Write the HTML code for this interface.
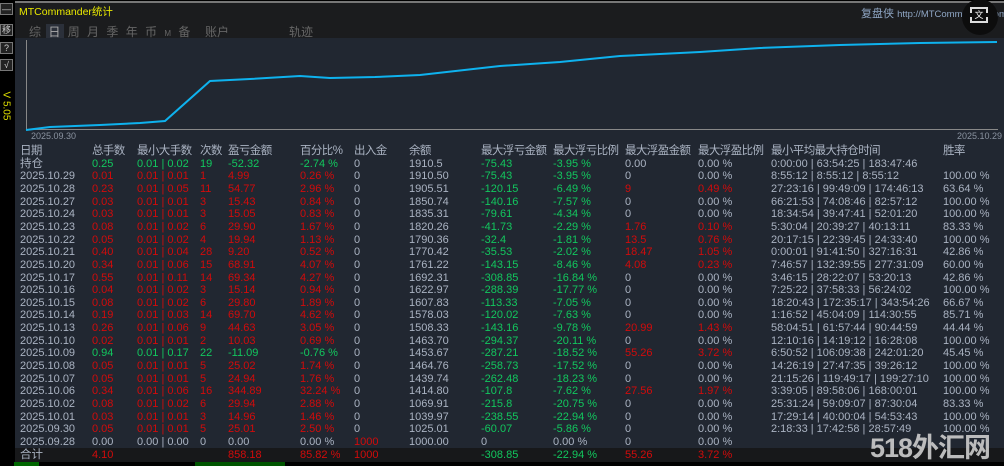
<!DOCTYPE html>
<html><head><meta charset="utf-8"><style>
*{margin:0;padding:0;box-sizing:border-box}
body{width:1004px;height:466px;background:#000;position:relative;overflow:hidden;font-family:"Liberation Sans","Noto Sans CJK SC",sans-serif;font-size:11px;color:#aab3c2}
.abs{position:absolute}
#side{left:0;top:0;width:14px;height:466px;background:#000}
.btn{position:absolute;left:0;width:13px;height:12px;border:1px solid #777;background:#222;color:#ccc;font-size:9px;line-height:10px;text-align:center}
#panel{left:15px;top:3px;width:989px;height:459px;background:#212731}
#titlebar{left:15px;top:3px;width:989px;height:35px;background:#1b1c1e}
#topline{left:15px;top:1px;width:989px;height:2px;background:#777}
.row{position:absolute;left:15px;width:989px;height:12.65px;line-height:12.65px;white-space:nowrap}
.row span{position:absolute;top:0}
.a{left:5px}.b{left:77px}.c{left:122px}.d{left:185px}.e{left:213px}.f{left:285px}.g{left:339px}.h{left:394px}.i{left:466px}.j{left:538px}.k{left:610px}.l{left:683px}.m{left:756px}.n{left:928px}
.r{color:#d20b0b}.gr{color:#12c75e}
.hd{color:#aab3c2;font-size:11.5px;letter-spacing:-0.6px}
</style></head><body>
<div class="abs" id="side">
<div class="btn" style="top:3px">—</div>
<div class="btn" style="top:24px">移</div>
<div class="btn" style="top:42px">?</div>
<div class="btn" style="top:59px">√</div>
<div class="abs" style="left:-4px;top:96px;width:20px;color:#e0e000;font-size:10px;transform:rotate(90deg);white-space:nowrap">V 5.05</div>
</div>
<div class="abs" id="panel"></div>
<div class="abs" id="titlebar"></div>
<div class="abs" id="topline"></div>
<div class="abs" style="left:19px;top:4px;color:#e8e800;font-size:10.5px">MTCommander统计</div>
<div class="abs" style="left:46px;top:24px;width:18px;height:14px;background:#2b303a"></div>
<div class="abs" style="left:29px;top:23px;color:#666;font-size:12px;word-spacing:4px;white-space:nowrap">综 <span style="color:#aaa">日</span> 周 月 季 年 币 <span style="font-size:8px">M</span> 备 &nbsp;账户</div>
<div class="abs" style="left:289px;top:23px;color:#666;font-size:12px">轨迹</div>
<div class="abs" style="left:861px;top:5px;color:#8fa6c4;font-size:11px;white-space:nowrap">复盘侠 <span style="font-size:9.5px">http://MTCommander.com</span></div>
<div class="abs" style="left:962px;top:-1px;width:36px;height:36px;border-radius:50%;background:#0d0d0d"></div>
<div class="abs" style="left:970px;top:7px;width:18px;height:16px;border:2px solid #ddd;color:#fff;font-size:9px;text-align:center;line-height:12px;border-left-style:dashed;border-right-style:dashed">文</div>
<svg class="abs" style="left:0;top:0" width="1004" height="145">
<line x1="26.5" y1="40" x2="26.5" y2="130" stroke="#888" stroke-width="1"/>
<line x1="26" y1="129.5" x2="998" y2="129.5" stroke="#888" stroke-width="1"/>
<polyline fill="none" stroke="#0eb2ee" stroke-width="2" points="26,130 50,127 100,125 140,123 165,121 210,81 250,79 300,76 330,78 375,77 420,75 500,66 560,62 620,56 700,52 760,48 840,45 920,43 997,42"/>
<text x="31" y="139" fill="#8a93a0" font-size="9" font-family="Liberation Sans">2025.09.30</text>
<text x="957" y="139" fill="#8a93a0" font-size="9" font-family="Liberation Sans">2025.10.29</text>
</svg>
<div class="abs" style="left:15px;top:448px;width:989px;height:14px;background:#17181a"></div>
<div class="abs" style="left:0;top:462px;width:1004px;height:4px;background:#000"></div>
<div class="abs" style="left:14px;top:462px;width:25px;height:4px;background:#0a0;opacity:.6"></div>
<div class="abs" style="left:195px;top:462px;width:90px;height:4px;background:#0a0;opacity:.5"></div>

<div class="row hd" style="top:145px"><span class="a">日期</span><span class="b">总手数</span><span class="c">最小大手数</span><span class="d">次数</span><span class="e">盈亏金额</span><span class="f">百分比%</span><span class="g">出入金</span><span class="h">余额</span><span class="i">最大浮亏金额</span><span class="j">最大浮亏比例</span><span class="k">最大浮盈金额</span><span class="l">最大浮盈比例</span><span class="m">最小平均最大持仓时间</span><span class="n">胜率</span></div>
<div class="row" style="top:157.6px"><span class="a" style="font-size:11.5px">持仓</span><span class="b gr">0.25</span><span class="c gr">0.01 | 0.02</span><span class="d gr">19</span><span class="e gr">-52.32</span><span class="f gr">-2.74 %</span><span class="g">0</span><span class="h">1910.5</span><span class="i gr">-75.43</span><span class="j gr">-3.95 %</span><span class="k">0.00</span><span class="l">0.00 %</span><span class="m">0:00:00 | 63:54:25 | 183:47:46</span></div>
<div class="row" style="top:170.3px"><span class="a">2025.10.29</span><span class="b r">0.01</span><span class="c r">0.01 | 0.01</span><span class="d r">1</span><span class="e r">4.99</span><span class="f r">0.26 %</span><span class="g">0</span><span class="h">1910.50</span><span class="i gr">-75.43</span><span class="j gr">-3.95 %</span><span class="k">0</span><span class="l">0.00 %</span><span class="m">8:55:12 | 8:55:12 | 8:55:12</span><span class="n">100.00 %</span></div>
<div class="row" style="top:182.9px"><span class="a">2025.10.28</span><span class="b r">0.23</span><span class="c r">0.01 | 0.05</span><span class="d r">11</span><span class="e r">54.77</span><span class="f r">2.96 %</span><span class="g">0</span><span class="h">1905.51</span><span class="i gr">-120.15</span><span class="j gr">-6.49 %</span><span class="k r">9</span><span class="l r">0.49 %</span><span class="m">27:23:16 | 99:49:09 | 174:46:13</span><span class="n">63.64 %</span></div>
<div class="row" style="top:195.6px"><span class="a">2025.10.27</span><span class="b r">0.03</span><span class="c r">0.01 | 0.01</span><span class="d r">3</span><span class="e r">15.43</span><span class="f r">0.84 %</span><span class="g">0</span><span class="h">1850.74</span><span class="i gr">-140.16</span><span class="j gr">-7.57 %</span><span class="k">0</span><span class="l">0.00 %</span><span class="m">66:21:53 | 74:08:46 | 82:57:12</span><span class="n">100.00 %</span></div>
<div class="row" style="top:208.2px"><span class="a">2025.10.24</span><span class="b r">0.03</span><span class="c r">0.01 | 0.01</span><span class="d r">3</span><span class="e r">15.05</span><span class="f r">0.83 %</span><span class="g">0</span><span class="h">1835.31</span><span class="i gr">-79.61</span><span class="j gr">-4.34 %</span><span class="k">0</span><span class="l">0.00 %</span><span class="m">18:34:54 | 39:47:41 | 52:01:20</span><span class="n">100.00 %</span></div>
<div class="row" style="top:220.9px"><span class="a">2025.10.23</span><span class="b r">0.08</span><span class="c r">0.01 | 0.02</span><span class="d r">6</span><span class="e r">29.90</span><span class="f r">1.67 %</span><span class="g">0</span><span class="h">1820.26</span><span class="i gr">-41.73</span><span class="j gr">-2.29 %</span><span class="k r">1.76</span><span class="l r">0.10 %</span><span class="m">5:30:04 | 20:39:27 | 40:13:11</span><span class="n">83.33 %</span></div>
<div class="row" style="top:233.5px"><span class="a">2025.10.22</span><span class="b r">0.05</span><span class="c r">0.01 | 0.02</span><span class="d r">4</span><span class="e r">19.94</span><span class="f r">1.13 %</span><span class="g">0</span><span class="h">1790.36</span><span class="i gr">-32.4</span><span class="j gr">-1.81 %</span><span class="k r">13.5</span><span class="l r">0.76 %</span><span class="m">20:17:15 | 22:39:45 | 24:33:40</span><span class="n">100.00 %</span></div>
<div class="row" style="top:246.2px"><span class="a">2025.10.21</span><span class="b r">0.40</span><span class="c r">0.01 | 0.04</span><span class="d r">28</span><span class="e r">9.20</span><span class="f r">0.52 %</span><span class="g">0</span><span class="h">1770.42</span><span class="i gr">-35.53</span><span class="j gr">-2.02 %</span><span class="k r">18.47</span><span class="l r">1.05 %</span><span class="m">0:00:01 | 91:41:50 | 327:16:31</span><span class="n">42.86 %</span></div>
<div class="row" style="top:258.8px"><span class="a">2025.10.20</span><span class="b r">0.34</span><span class="c r">0.01 | 0.06</span><span class="d r">15</span><span class="e r">68.91</span><span class="f r">4.07 %</span><span class="g">0</span><span class="h">1761.22</span><span class="i gr">-143.15</span><span class="j gr">-8.46 %</span><span class="k r">4.08</span><span class="l r">0.23 %</span><span class="m">7:46:57 | 132:39:55 | 277:31:09</span><span class="n">60.00 %</span></div>
<div class="row" style="top:271.5px"><span class="a">2025.10.17</span><span class="b r">0.55</span><span class="c r">0.01 | 0.11</span><span class="d r">14</span><span class="e r">69.34</span><span class="f r">4.27 %</span><span class="g">0</span><span class="h">1692.31</span><span class="i gr">-308.85</span><span class="j gr">-16.84 %</span><span class="k">0</span><span class="l">0.00 %</span><span class="m">3:46:15 | 28:22:07 | 53:20:13</span><span class="n">42.86 %</span></div>
<div class="row" style="top:284.1px"><span class="a">2025.10.16</span><span class="b r">0.04</span><span class="c r">0.01 | 0.02</span><span class="d r">3</span><span class="e r">15.14</span><span class="f r">0.94 %</span><span class="g">0</span><span class="h">1622.97</span><span class="i gr">-288.39</span><span class="j gr">-17.77 %</span><span class="k">0</span><span class="l">0.00 %</span><span class="m">7:25:22 | 37:58:33 | 56:24:02</span><span class="n">100.00 %</span></div>
<div class="row" style="top:296.8px"><span class="a">2025.10.15</span><span class="b r">0.08</span><span class="c r">0.01 | 0.02</span><span class="d r">6</span><span class="e r">29.80</span><span class="f r">1.89 %</span><span class="g">0</span><span class="h">1607.83</span><span class="i gr">-113.33</span><span class="j gr">-7.05 %</span><span class="k">0</span><span class="l">0.00 %</span><span class="m">18:20:43 | 172:35:17 | 343:54:26</span><span class="n">66.67 %</span></div>
<div class="row" style="top:309.4px"><span class="a">2025.10.14</span><span class="b r">0.19</span><span class="c r">0.01 | 0.03</span><span class="d r">14</span><span class="e r">69.70</span><span class="f r">4.62 %</span><span class="g">0</span><span class="h">1578.03</span><span class="i gr">-120.02</span><span class="j gr">-7.63 %</span><span class="k">0</span><span class="l">0.00 %</span><span class="m">1:16:52 | 45:04:09 | 114:30:55</span><span class="n">85.71 %</span></div>
<div class="row" style="top:322.1px"><span class="a">2025.10.13</span><span class="b r">0.26</span><span class="c r">0.01 | 0.06</span><span class="d r">9</span><span class="e r">44.63</span><span class="f r">3.05 %</span><span class="g">0</span><span class="h">1508.33</span><span class="i gr">-143.16</span><span class="j gr">-9.78 %</span><span class="k r">20.99</span><span class="l r">1.43 %</span><span class="m">58:04:51 | 61:57:44 | 90:44:59</span><span class="n">44.44 %</span></div>
<div class="row" style="top:334.7px"><span class="a">2025.10.10</span><span class="b r">0.02</span><span class="c r">0.01 | 0.01</span><span class="d r">2</span><span class="e r">10.03</span><span class="f r">0.69 %</span><span class="g">0</span><span class="h">1463.70</span><span class="i gr">-294.37</span><span class="j gr">-20.11 %</span><span class="k">0</span><span class="l">0.00 %</span><span class="m">12:10:16 | 14:19:12 | 16:28:08</span><span class="n">100.00 %</span></div>
<div class="row" style="top:347.4px"><span class="a">2025.10.09</span><span class="b gr">0.94</span><span class="c gr">0.01 | 0.17</span><span class="d gr">22</span><span class="e gr">-11.09</span><span class="f gr">-0.76 %</span><span class="g">0</span><span class="h">1453.67</span><span class="i gr">-287.21</span><span class="j gr">-18.52 %</span><span class="k r">55.26</span><span class="l r">3.72 %</span><span class="m">6:50:52 | 106:09:38 | 242:01:20</span><span class="n">45.45 %</span></div>
<div class="row" style="top:360px"><span class="a">2025.10.08</span><span class="b r">0.05</span><span class="c r">0.01 | 0.01</span><span class="d r">5</span><span class="e r">25.02</span><span class="f r">1.74 %</span><span class="g">0</span><span class="h">1464.76</span><span class="i gr">-258.73</span><span class="j gr">-17.52 %</span><span class="k">0</span><span class="l">0.00 %</span><span class="m">14:26:19 | 27:47:35 | 39:26:12</span><span class="n">100.00 %</span></div>
<div class="row" style="top:372.7px"><span class="a">2025.10.07</span><span class="b r">0.05</span><span class="c r">0.01 | 0.01</span><span class="d r">5</span><span class="e r">24.94</span><span class="f r">1.76 %</span><span class="g">0</span><span class="h">1439.74</span><span class="i gr">-262.48</span><span class="j gr">-18.23 %</span><span class="k">0</span><span class="l">0.00 %</span><span class="m">21:15:26 | 119:49:17 | 199:27:10</span><span class="n">100.00 %</span></div>
<div class="row" style="top:385.3px"><span class="a">2025.10.06</span><span class="b r">0.34</span><span class="c r">0.01 | 0.06</span><span class="d r">16</span><span class="e r">344.89</span><span class="f r">32.24 %</span><span class="g">0</span><span class="h">1414.80</span><span class="i gr">-107.8</span><span class="j gr">-7.62 %</span><span class="k r">27.56</span><span class="l r">1.97 %</span><span class="m">3:39:05 | 89:58:06 | 168:00:01</span><span class="n">100.00 %</span></div>
<div class="row" style="top:398px"><span class="a">2025.10.02</span><span class="b r">0.08</span><span class="c r">0.01 | 0.02</span><span class="d r">6</span><span class="e r">29.94</span><span class="f r">2.88 %</span><span class="g">0</span><span class="h">1069.91</span><span class="i gr">-215.8</span><span class="j gr">-20.75 %</span><span class="k">0</span><span class="l">0.00 %</span><span class="m">25:31:24 | 59:09:07 | 87:30:04</span><span class="n">83.33 %</span></div>
<div class="row" style="top:410.6px"><span class="a">2025.10.01</span><span class="b r">0.03</span><span class="c r">0.01 | 0.01</span><span class="d r">3</span><span class="e r">14.96</span><span class="f r">1.46 %</span><span class="g">0</span><span class="h">1039.97</span><span class="i gr">-238.55</span><span class="j gr">-22.94 %</span><span class="k">0</span><span class="l">0.00 %</span><span class="m">17:29:14 | 40:00:04 | 54:53:43</span><span class="n">100.00 %</span></div>
<div class="row" style="top:423.3px"><span class="a">2025.09.30</span><span class="b r">0.05</span><span class="c r">0.01 | 0.01</span><span class="d r">5</span><span class="e r">25.01</span><span class="f r">2.50 %</span><span class="g">0</span><span class="h">1025.01</span><span class="i gr">-60.07</span><span class="j gr">-5.86 %</span><span class="k">0</span><span class="l">0.00 %</span><span class="m">2:18:33 | 17:42:58 | 28:57:49</span><span class="n">100.00 %</span></div>
<div class="row" style="top:435.9px"><span class="a">2025.09.28</span><span class="b">0.00</span><span class="c">0.00 | 0.00</span><span class="d">0</span><span class="e">0.00</span><span class="f">0.00 %</span><span class="g r">1000</span><span class="h">1000.00</span><span class="i">0</span><span class="j">0.00 %</span><span class="k">0</span><span class="l">0.00 %</span></div>
<div class="row" style="top:449px"><span class="a" style="font-size:11.5px">合计</span><span class="b r">4.10</span><span class="e r">858.18</span><span class="f r">85.82 %</span><span class="g r">1000</span><span class="i gr">-308.85</span><span class="j gr">-22.94 %</span><span class="k r">55.26</span><span class="l r">3.72 %</span></div>
<div class="abs" style="left:870px;top:426px;color:rgba(205,205,205,.9);font-size:27px;font-weight:bold;letter-spacing:-1px;white-space:nowrap;font-family:'Liberation Sans','Noto Sans CJK SC',sans-serif">518外汇网</div>
</body></html>
